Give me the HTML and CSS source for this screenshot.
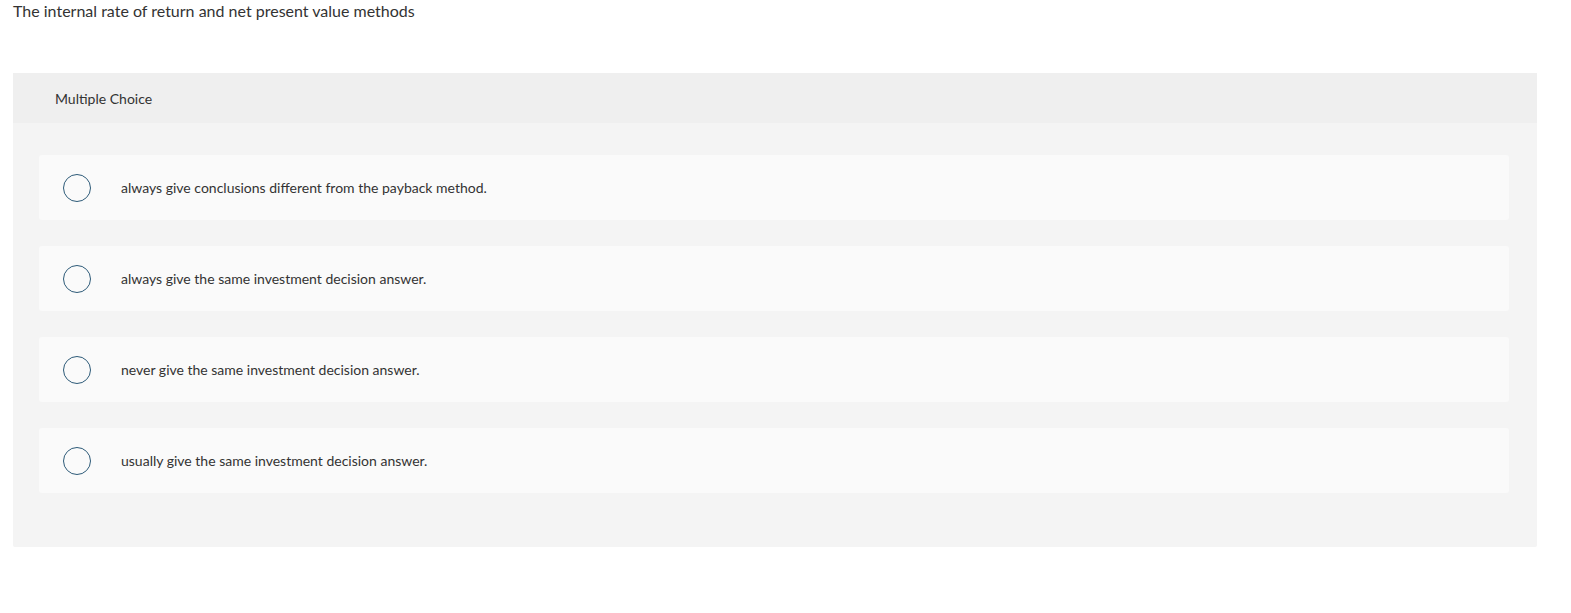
FILE: index.html
```html
<!DOCTYPE html>
<html>
<head>
<meta charset="utf-8">
<link rel="stylesheet" href="styles.css">
</head>
<body>
<div class="page">
  <p class="prompt">The internal rate of return and net present value methods</p>
  <div class="panel">
    <div class="panel-head">Multiple Choice</div>
    <div class="panel-body">
      <div class="option"><span class="radio"></span><span class="label">always give conclusions different from the payback method.</span></div>
      <div class="option"><span class="radio"></span><span class="label">always give the same investment decision answer.</span></div>
      <div class="option"><span class="radio"></span><span class="label">never give the same investment decision answer.</span></div>
      <div class="option"><span class="radio"></span><span class="label">usually give the same investment decision answer.</span></div>
    </div>
  </div>
</div>
</body>
</html>
```
FILE: styles.css
```css
html, body { margin: 0; padding: 0; background: #fff; }
body { font-family: Lato, "Open Sans", sans-serif; color: #333; }
.page { padding: 1px 34px 0 13px; }
.prompt { margin: 0; font-size: 16px; line-height: 19px; color: #333; }
.panel { margin-top: 53px; background: #f4f4f4; border-radius: 2px; padding-bottom: 54px; }
.panel-head { background: #efefef; height: 50px; display: flex; align-items: center; padding-left: 42px; font-size: 14px; color: #333; }
.panel-body { padding: 32px 28px 0 26px; display: flex; flex-direction: column; gap: 26px; }
.option { background: #fafafa; height: 65px; border-radius: 3px; display: flex; align-items: center; padding-left: 24px; }
.radio { width: 26px; height: 26px; border: 1.5px solid #2d5a78; border-radius: 50%; box-sizing: content-box; flex: none; }
.label { margin-left: 30px; font-size: 14px; color: #333; }
```
